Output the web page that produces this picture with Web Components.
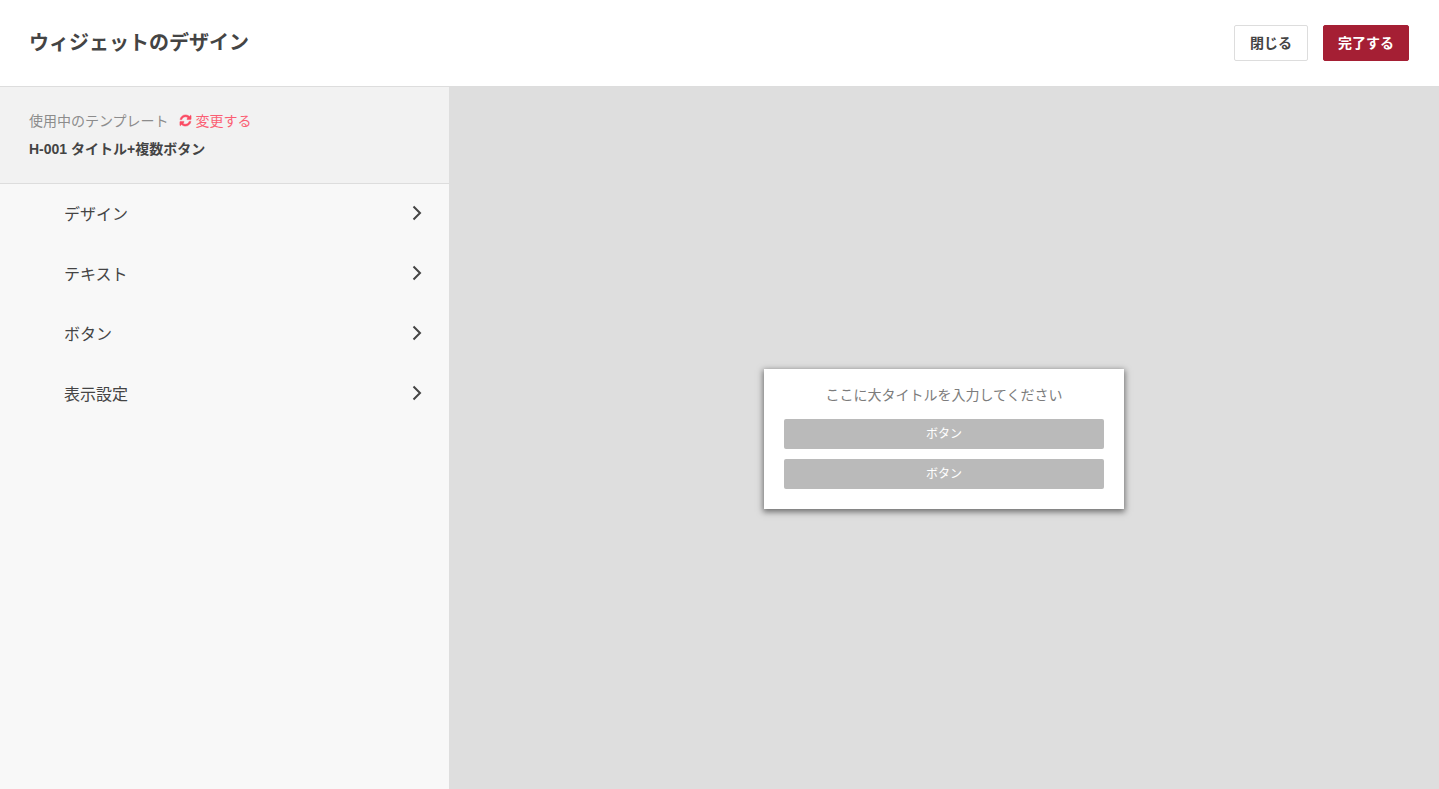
<!doctype html>
<html lang="ja">
<head>
<meta charset="utf-8">
<title>ウィジェットのデザイン</title>
<style>
  html, body { margin: 0; height: 100%; }
  body {
    font-family: "Liberation Sans", "Noto Sans CJK JP", sans-serif;
    color: #444;
    overflow: hidden;
  }
</style>
</head>
<body>
<widget-editor>
  <editor-header slot="header" heading="ウィジェットのデザイン"></editor-header>
  <editor-sidebar slot="sidebar" template-name="H-001 タイトル+複数ボタン">
    <menu-row>デザイン</menu-row>
    <menu-row>テキスト</menu-row>
    <menu-row>ボタン</menu-row>
    <menu-row>表示設定</menu-row>
  </editor-sidebar>
  <widget-preview slot="preview" heading="ここに大タイトルを入力してください">
    <preview-button>ボタン</preview-button>
    <preview-button>ボタン</preview-button>
  </widget-preview>
</widget-editor>

<script>
const html = String.raw;

class WidgetEditor extends HTMLElement {
  constructor() {
    super();
    this.attachShadow({ mode: "open" });
    this.shadowRoot.innerHTML = html`
      <style>
        :host {
          display: grid;
          grid-template-columns: 449px 1fr;
          grid-template-rows: 87px 1fr;
          height: 789px;
        }
        .top { grid-column: 1 / -1; }
      </style>
      <div class="top"><slot name="header"></slot></div>
      <slot name="sidebar"></slot>
      <slot name="preview"></slot>
    `;
  }
}

class EditorHeader extends HTMLElement {
  constructor() {
    super();
    this.attachShadow({ mode: "open" });
  }

  connectedCallback() {
    this.shadowRoot.innerHTML = html`
      <style>
        :host {
          display: flex;
          align-items: center;
          justify-content: space-between;
          box-sizing: border-box;
          height: 87px;
          padding: 0 30px 1px 29px;
          background: #fff;
          border-bottom: 1px solid #ddd;
        }
        h1 {
          margin: 0 0 2px;
          font-size: 20px;
          font-weight: 700;
          color: #444;
        }
        div { display: flex; gap: 15px; }
        button {
          box-sizing: border-box;
          height: 36px;
          padding: 0 0 1px;
          border-radius: 2px;
          font: 700 14px "Liberation Sans", "Noto Sans CJK JP", sans-serif;
        }
        .close { width: 74px; background: #fff; border: 1px solid #ddd; color: #444; }
        .done { width: 86px; background: #a51f34; border: 1px solid #a51f34; color: #fff; }
      </style>
      <h1>${this.getAttribute("heading")}</h1>
      <div>
        <button class="close">閉じる</button>
        <button class="done">完了する</button>
      </div>
    `;
  }
}

class EditorSidebar extends HTMLElement {
  constructor() {
    super();
    this.attachShadow({ mode: "open" });
  }

  connectedCallback() {
    this.shadowRoot.innerHTML = html`
      <style>
        :host { display: block; background: #f8f8f8; }
        header {
          box-sizing: border-box;
          height: 97px;
          padding: 23px 29px 0;
          background: #f2f2f2;
          border-bottom: 1px solid #ddd;
        }
        .line {
          display: flex;
          align-items: center;
          height: 20px;
          font-size: 14px;
          color: #8c8c8c;
        }
        .change {
          display: flex;
          align-items: center;
          gap: 4px;
          margin-left: 10px;
          color: #fb5f74;
        }
        svg {
          width: 13px;
          height: 13px;
          fill: #fb4a62;
          stroke: #fb4a62;
          stroke-width: 70;
        }
        .name {
          margin-top: 10px;
          height: 19px;
          line-height: 19px;
          font-size: 14px;
          font-weight: 700;
          color: #444;
        }
      </style>
      <header>
        <div class="line">
          <span>使用中のテンプレート</span>
          <span class="change">
            <svg viewBox="0 0 1792 1792"><path d="M1639 1056q0 5-1 7-64 268-268 434.5t-478 166.5q-146 0-282.5-55t-243.5-157l-129 129q-19 19-45 19t-45-19-19-45v-448q0-26 19-45t45-19h448q26 0 45 19t19 45-19 45l-137 137q71 66 161 102t187 36q134 0 250-65t186-179q11-17 53-117 8-23 30-23h192q13 0 22.5 9.5t9.5 22.5zm25-800v448q0 26-19 45t-45 19h-448q-26 0-45-19t-19-45 19-45l138-138q-148-137-349-137-134 0-250 65t-186 179q-11 17-53 117-8 23-30 23h-199q-13 0-22.5-9.5t-9.5-22.5v-7q65-268 270-434.5t480-166.5q146 0 284 55.5t245 156.5l130-129q19-19 45-19t45 19 19 45z"/></svg>
            変更する
          </span>
        </div>
        <div class="name">${this.getAttribute("template-name")}</div>
      </header>
      <slot></slot>
    `;
  }
}

class MenuRow extends HTMLElement {
  constructor() {
    super();
    this.attachShadow({ mode: "open" });
    this.shadowRoot.innerHTML = html`
      <style>
        :host {
          display: flex;
          align-items: center;
          justify-content: space-between;
          box-sizing: border-box;
          height: 60px;
          padding: 0 26px 3px 64px;
          font-size: 16px;
          color: #444;
        }
        svg { width: 12px; height: 16px; fill: none; stroke: #444; stroke-width: 2; }
      </style>
      <slot></slot>
      <svg viewBox="0 0 12 16"><path d="M2.5 1.5 9 8l-6.500 6.500"/></svg>
    `;
  }
}

class WidgetPreview extends HTMLElement {
  constructor() {
    super();
    this.attachShadow({ mode: "open" });
  }

  connectedCallback() {
    this.shadowRoot.innerHTML = html`
      <style>
        :host {
          display: flex;
          align-items: center;
          justify-content: center;
          background: #dedede;
        }
        .card {
          box-sizing: border-box;
          width: 360px;
          height: 140px;
          margin-top: 1px;
          padding: 16px 20px 0;
          background: #fff;
          box-shadow: 0 2px 6px 1px rgba(0, 0, 0, 0.5);
        }
        h2 {
          margin: 0 0 14px;
          height: 20px;
          line-height: 20px;
          font-size: 14px;
          font-weight: 400;
          text-align: center;
          color: #7c7c7c;
        }
        .buttons { display: grid; gap: 10px; }
      </style>
      <div class="card">
        <h2>${this.getAttribute("heading")}</h2>
        <div class="buttons"><slot></slot></div>
      </div>
    `;
  }
}

class PreviewButton extends HTMLElement {
  constructor() {
    super();
    this.attachShadow({ mode: "open" });
    this.shadowRoot.innerHTML = html`
      <style>
        :host {
          display: flex;
          align-items: center;
          justify-content: center;
          box-sizing: border-box;
          height: 30px;
          padding-bottom: 2px;
          border-radius: 2px;
          background: #bababa;
          color: #fff;
          font-size: 12px;
        }
      </style>
      <slot></slot>
    `;
  }
}

customElements.define("widget-editor", WidgetEditor);
customElements.define("editor-header", EditorHeader);
customElements.define("editor-sidebar", EditorSidebar);
customElements.define("menu-row", MenuRow);
customElements.define("widget-preview", WidgetPreview);
customElements.define("preview-button", PreviewButton);
</script>
</body>
</html>
